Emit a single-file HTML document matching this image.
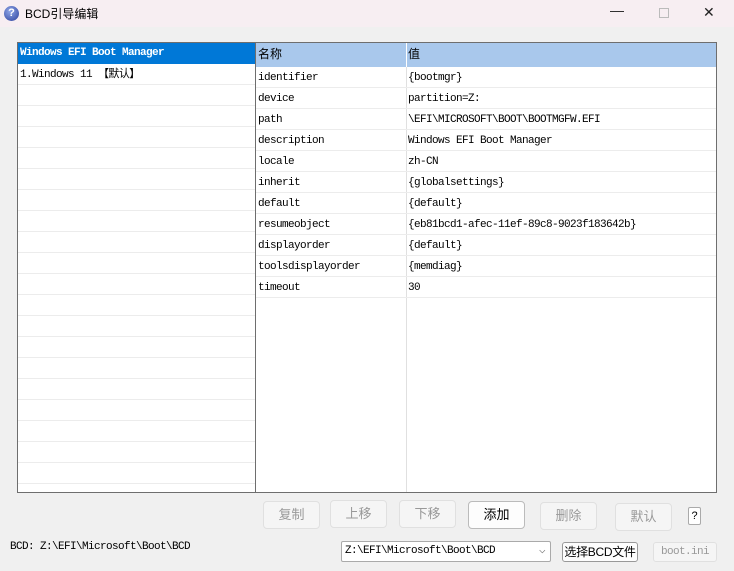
<!DOCTYPE html>
<html><head><meta charset="utf-8"><style>
*{margin:0;padding:0;box-sizing:border-box}
body{width:734px;height:571px;background:#f0f0f0;position:relative;overflow:hidden;font-family:"Liberation Mono","Noto Sans CJK SC",monospace;font-size:11px;letter-spacing:-0.6px;color:#000}
.title{position:absolute;left:0;top:0;width:734px;height:27px;background:#f7eef2;}
.title .t{position:absolute;left:25px;top:5px;font-family:"Liberation Sans","Noto Sans CJK SC",sans-serif;font-size:12px;letter-spacing:0}
.icon{position:absolute;left:4px;top:6px;width:15px;height:15px;border-radius:50%;background:radial-gradient(circle at 40% 35%,#8fa6e8,#2a3f9a);color:#fff;font:bold 11px "Liberation Sans",sans-serif;text-align:center;line-height:15px;letter-spacing:0}
.ctl{position:absolute;top:6px;font:14px "Liberation Sans",sans-serif;color:#222}
.list{position:absolute;left:17px;top:42px;width:240px;height:451px;border:1px solid #6e6e6e;background:#fff;border-right:none}
.row{height:21px;border-bottom:1px solid #ececec;line-height:22px;padding-left:2px;white-space:pre}
.sel{background:#0078d7;color:#fff;font-weight:bold;height:21px;line-height:21px;padding-left:2px}
.tbl{position:absolute;left:255px;top:42px;width:462px;height:451px;border:1px solid #6e6e6e;background:#fff}
.tr{height:21px;border-bottom:1px solid #ececec;line-height:22px;position:relative;white-space:pre}
.tr .a{position:absolute;left:2px}
.tr .b{position:absolute;left:152px}
.hd{background:#a9c8ec;font-family:"Liberation Sans","Noto Sans CJK SC",sans-serif;font-size:12px;letter-spacing:0;border-bottom:none;height:24px;line-height:22px}
.vline{position:absolute;left:150px;top:0;bottom:0;border-left:1px solid #e0e0e0}
.hd .v{position:absolute;left:150px;top:0;bottom:0;border-left:1px solid #fff}
.btn{position:absolute;top:501px;height:28px;border:1px solid #e0e0e0;border-radius:4px;background:#f5f5f5;color:#999;font:13px "Liberation Sans","Noto Sans CJK SC",sans-serif;letter-spacing:0;text-align:center;line-height:26px}
.act{color:#000;background:#fdfdfd;border-color:#bbb}
</style></head><body>
<div class="title"><div class="icon">?</div><div class="t">BCD引导编辑</div>
<div class="ctl" style="left:610px;top:2px">—</div>
<div style="position:absolute;left:659px;top:8px;width:10px;height:10px;border:1px solid #bbb"></div>
<div class="ctl" style="left:703px;top:4px">✕</div></div>
<div class="list">
<div class="sel">Windows EFI Boot Manager</div>
<div class="row">1.Windows 11 【默认】</div>
<div class="row"></div><div class="row"></div><div class="row"></div><div class="row"></div><div class="row"></div><div class="row"></div><div class="row"></div><div class="row"></div><div class="row"></div><div class="row"></div><div class="row"></div><div class="row"></div><div class="row"></div><div class="row"></div><div class="row"></div><div class="row"></div><div class="row"></div><div class="row"></div><div class="row"></div>
</div>
<div class="tbl"><div class="vline"></div>
<div class="tr hd"><span class="a">名称</span><div class="v"></div><span class="b">值</span></div>
<div class="tr"><span class="a">identifier</span><span class="b">{bootmgr}</span></div>
<div class="tr"><span class="a">device</span><span class="b">partition=Z:</span></div>
<div class="tr"><span class="a">path</span><span class="b">\EFI\MICROSOFT\BOOT\BOOTMGFW.EFI</span></div>
<div class="tr"><span class="a">description</span><span class="b">Windows EFI Boot Manager</span></div>
<div class="tr"><span class="a">locale</span><span class="b">zh-CN</span></div>
<div class="tr"><span class="a">inherit</span><span class="b">{globalsettings}</span></div>
<div class="tr"><span class="a">default</span><span class="b">{default}</span></div>
<div class="tr"><span class="a">resumeobject</span><span class="b">{eb81bcd1-afec-11ef-89c8-9023f183642b}</span></div>
<div class="tr"><span class="a">displayorder</span><span class="b">{default}</span></div>
<div class="tr"><span class="a">toolsdisplayorder</span><span class="b">{memdiag}</span></div>
<div class="tr"><span class="a">timeout</span><span class="b">30</span></div>
</div>
<div class="btn" style="left:263px;width:57px">复制</div>
<div class="btn" style="left:330px;width:57px;top:500px">上移</div>
<div class="btn" style="left:399px;width:57px;top:500px">下移</div>
<div class="btn act" style="left:468px;width:57px;top:501px">添加</div>
<div class="btn" style="left:540px;width:57px;top:502px">删除</div>
<div class="btn" style="left:615px;width:57px;top:503px">默认</div>
<div style="position:absolute;left:688px;top:507px;width:13px;height:18px;border:1px solid #aaa;border-radius:2px;background:#fff;font:11px 'Liberation Sans';letter-spacing:0;text-align:center;line-height:16px">?</div>
<div style="position:absolute;left:10px;top:541px">BCD: Z:\EFI\Microsoft\Boot\BCD</div>
<div style="position:absolute;left:341px;top:541px;width:210px;height:21px;border:1px solid #aaa;border-radius:2px;background:#fff;line-height:19px;padding-left:3px">Z:\EFI\Microsoft\Boot\BCD<span style="position:absolute;right:5px;color:#666">⌵</span></div>
<div style="position:absolute;left:562px;top:542px;width:76px;height:20px;border:1px solid #999;border-radius:3px;background:#fdfdfd;font:12px 'Liberation Sans','Noto Sans CJK SC',sans-serif;letter-spacing:-0.3px;white-space:nowrap;text-align:center;line-height:18px">选择BCD文件</div>
<div style="position:absolute;left:653px;top:542px;width:64px;height:20px;border:1px solid #e0e0e0;border-radius:3px;background:#f5f5f5;color:#999;text-align:center;line-height:18px">boot.ini</div>
</body></html>
